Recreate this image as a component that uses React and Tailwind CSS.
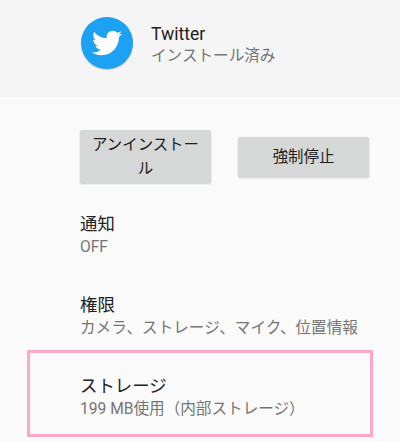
import React from "react";
import { FaTwitter } from "react-icons/fa";

function Row({ title, sub, className = "" }) {
  return (
    <div className={className}>
      <div className="text-[17.4px] leading-[24px] text-[#212121]">{title}</div>
      <div className="text-[15.6px] leading-[22px] text-[#757575]">{sub}</div>
    </div>
  );
}

export default function App() {
  return (
    <div className="w-[400px] h-[441px] overflow-hidden bg-[#fafafa] font-['Roboto','Noto_Sans_CJK_JP',sans-serif]">
      <div className="h-[97px] bg-[#f5f5f5] flex items-start pl-[81px] pt-[17px] gap-[18px]">
        <div className="w-[52px] h-[52px] rounded-full bg-[#1da1f2] flex items-center justify-center shadow-[0_1px_1px_rgba(0,0,0,0.2)]">
          <FaTwitter className="text-white w-[30px] h-[30px]" />
        </div>
        <div className="pt-[5px]">
          <div className="text-[17.6px] leading-[24px] text-[#212121]">Twitter</div>
          <div className="text-[15.6px] leading-[20px] text-[#757575]">インストール済み</div>
        </div>
      </div>
      <div className="flex items-center pl-[80px] gap-[27px] mt-[33px]">
        <div className="w-[131px] h-[53px] bg-[#d6d7d7] rounded-[2px] shadow-[0_1px_2px_rgba(0,0,0,0.2)] text-[15.4px] leading-[24px] text-[#212121] text-center px-[8px] py-[3px]">
          アンインストール
        </div>
        <div className="w-[131px] h-[40px] bg-[#d6d7d7] rounded-[2px] shadow-[0_1px_2px_rgba(0,0,0,0.2)] text-[15.4px] leading-[24px] text-[#212121] flex items-center justify-center">
          強制停止
        </div>
      </div>
      <Row title="通知" sub="OFF" className="ml-[80px] mt-[29px]" />
      <Row title="権限" sub="カメラ、ストレージ、マイク、位置情報" className="ml-[80px] mt-[35px]" />
      <div className="mx-[27px] mt-[11px] h-[87px] border-[3px] border-[#ffa8c5] pl-[50px] pt-[21px]">
        <Row title="ストレージ" sub="199 MB使用（内部ストレージ）" />
      </div>
    </div>
  );
}
